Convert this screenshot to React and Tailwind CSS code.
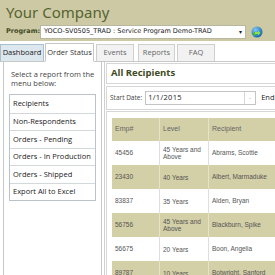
import React from "react";

const rows = [
  ["45456", "45 Years and Above", "Abrams, Scottie", false],
  ["23430", "40 Years", "Albert, Marmaduke", true],
  ["83837", "35 Years", "Alden, Bryan", false],
  ["56756", "45 Years and Above", "Blackburn, Spike", true],
  ["56675", "20 Years", "Boon, Angelia", false],
  ["89787", "10 Years", "Botwright, Sanford", true],
];

const menu = [
  "Recipients",
  "Non-Respondents",
  "Orders - Pending",
  "Orders - In Production",
  "Orders - Shipped",
  "Export All to Excel",
];

export default function App() {
  return (
    <div className="w-[275px] h-[275px] overflow-hidden bg-white relative" style={{ fontFamily: '"Open Sans", "Noto Sans", sans-serif' }}>
      {/* Header */}
      <div className="h-[41px] bg-[#cdc9a5] px-[6px] pt-[2px]">
        <div className="text-[15px] leading-[20px] font-normal text-[#56642f]" style={{ fontFamily: '"Noto Sans", sans-serif' }}>Your Company</div>
        <div className="flex items-center mt-[2px] h-[15px]">
          <span className="text-[6.5px] font-bold text-[#3e4a22] w-[34px] whitespace-nowrap" style={{ fontFamily: '"DejaVu Sans", sans-serif' }}>Program:</span>
          <div className="w-[206px] h-[14px] bg-white border border-[#b8b8a0] flex items-center px-[3px] text-[6.5px] text-[#222] whitespace-nowrap" style={{ fontFamily: '"DejaVu Sans", sans-serif' }}>
            <span className="flex-1">YOCO-SV0505_TRAD : Service Program Demo-TRAD</span>
            <span className="text-[6px]">▾</span>
          </div>
          <svg width="12" height="12" viewBox="0 0 12 12" className="ml-[5px]">
            <defs>
              <radialGradient id="g" cx="0.35" cy="0.3" r="0.8">
                <stop offset="0" stopColor="#7ec8f0" />
                <stop offset="1" stopColor="#0a5ea8" />
              </radialGradient>
            </defs>
            <circle cx="6" cy="6" r="5.5" fill="url(#g)" />
            <path d="M2 7 Q4 5 6 7 Q5 10 3 10 Z" fill="#3fbf3a" />
            <path d="M4 6 L7 6 L7 4.5 L9.5 7 L7 9.5 L7 8 L4 8 Z" fill="#8fe04a" />
          </svg>
        </div>
      </div>

      {/* Tabs */}
      <div className="flex items-end h-[20px] mt-[1px] text-[7.5px] text-[#333] border-b border-[#c8c8c8] whitespace-nowrap">
        <div className="h-[17px] w-[44px] flex items-center justify-center bg-[#dde7ee] border border-[#a9c0d0] border-b-0 text-[#222]">Dashboard</div>
        <div className="h-[19px] w-[49px] ml-[1px] flex items-center justify-center bg-white border border-[#c8c8c8] border-b-white -mb-px">Order Status</div>
        <div className="h-[17px] w-[38px] ml-[2px] flex items-center justify-center bg-[#f2f2f2] border border-[#cfcfcf] border-b-0 text-[#666]">Events</div>
        <div className="h-[17px] w-[37px] ml-[4px] flex items-center justify-center bg-[#f2f2f2] border border-[#cfcfcf] border-b-0 text-[#666]">Reports</div>
        <div className="h-[17px] w-[38px] ml-[2px] flex items-center justify-center bg-[#f2f2f2] border border-[#cfcfcf] border-b-0 text-[#666]">FAQ</div>
      </div>

      <div className="flex">
        {/* Left panel */}
        <div className="w-[99px] ml-[3px] h-[220px] border-x border-[#c8c8c8] px-[5px] pt-[8px]">
          <div className="text-[7.5px] leading-[9px] text-[#444] pl-[2px]">Select a report from the menu below:</div>
          <div className="mt-[6px] border border-[#b9c3c9]">
            {menu.map((m, i) => (
              <div key={m} className={`h-[17.5px] flex items-center px-[3px] text-[7.5px] text-[#222] whitespace-nowrap ${i > 0 ? "border-t border-[#d3d8db]" : ""}`}>{m}</div>
            ))}
          </div>
        </div>

        {/* Right */}
        <div className="flex-1 ml-[2px] border-l border-[#d0d0d0] pl-[1px] pt-[1px]">
          <div className="h-[21px] border border-[#d6d6d6] border-r-0 flex items-center pl-[4px] text-[9.5px] font-bold text-[#3f4a22]">All Recipients</div>
          <div className="h-[24px] mt-[2px] border border-[#d6d6d6] border-r-0 flex items-center pl-[3px] text-[6.5px] text-[#444] whitespace-nowrap">
            <span>Start Date:</span>
            <div className="ml-[3px] w-[111px] h-[14px] border border-[#c4c4c4] flex items-center">
              <span className="flex-1 pl-[2px] text-[7.5px] text-[#222] tracking-[0.3px]">1/1/2015</span>
              <span className="w-[11px] h-full border-l border-[#d6d6d6] flex items-center justify-center text-[6px] text-[#888]">-</span>
            </div>
            <span className="ml-[5px] text-[7.5px] text-[#222]">End</span>
          </div>
          <div className="mt-[1px] border border-[#d6d6d6] border-r-0 pt-[6px] pl-[5px] h-[170px]" style={{ fontFamily: '"Liberation Sans", Arial, sans-serif' }}>
            <div className="text-[6.5px] text-[#555]">
              <div className="flex h-[23px] bg-[#d3cfa6] text-[#666] text-[7px]">
                <div className="w-[48px] pl-[3px] flex items-center border-r border-[#e6e3cc]">Emp#</div>
                <div className="w-[49px] pl-[3px] flex items-center border-r border-[#e6e3cc]">Level</div>
                <div className="flex-1 pl-[3px] flex items-center">Recipient</div>
              </div>
              {rows.map(([e, l, r, s]) => (
                <div key={e} className={`flex h-[24px] ${s ? "bg-[#d3cfa6]" : "bg-white"}`}>
                  <div className={`w-[48px] pl-[3px] flex items-center border-r ${s ? "border-[#e6e3cc]" : "border-[#dedede]"}`}>{e}</div>
                  <div className={`w-[49px] pl-[3px] pr-[2px] flex items-center leading-[7px] border-r ${s ? "border-[#e6e3cc]" : "border-[#dedede]"}`}>{l}</div>
                  <div className="flex-1 pl-[3px] flex items-center">{r}</div>
                </div>
              ))}
            </div>
          </div>
        </div>
      </div>
    </div>
  );
}
